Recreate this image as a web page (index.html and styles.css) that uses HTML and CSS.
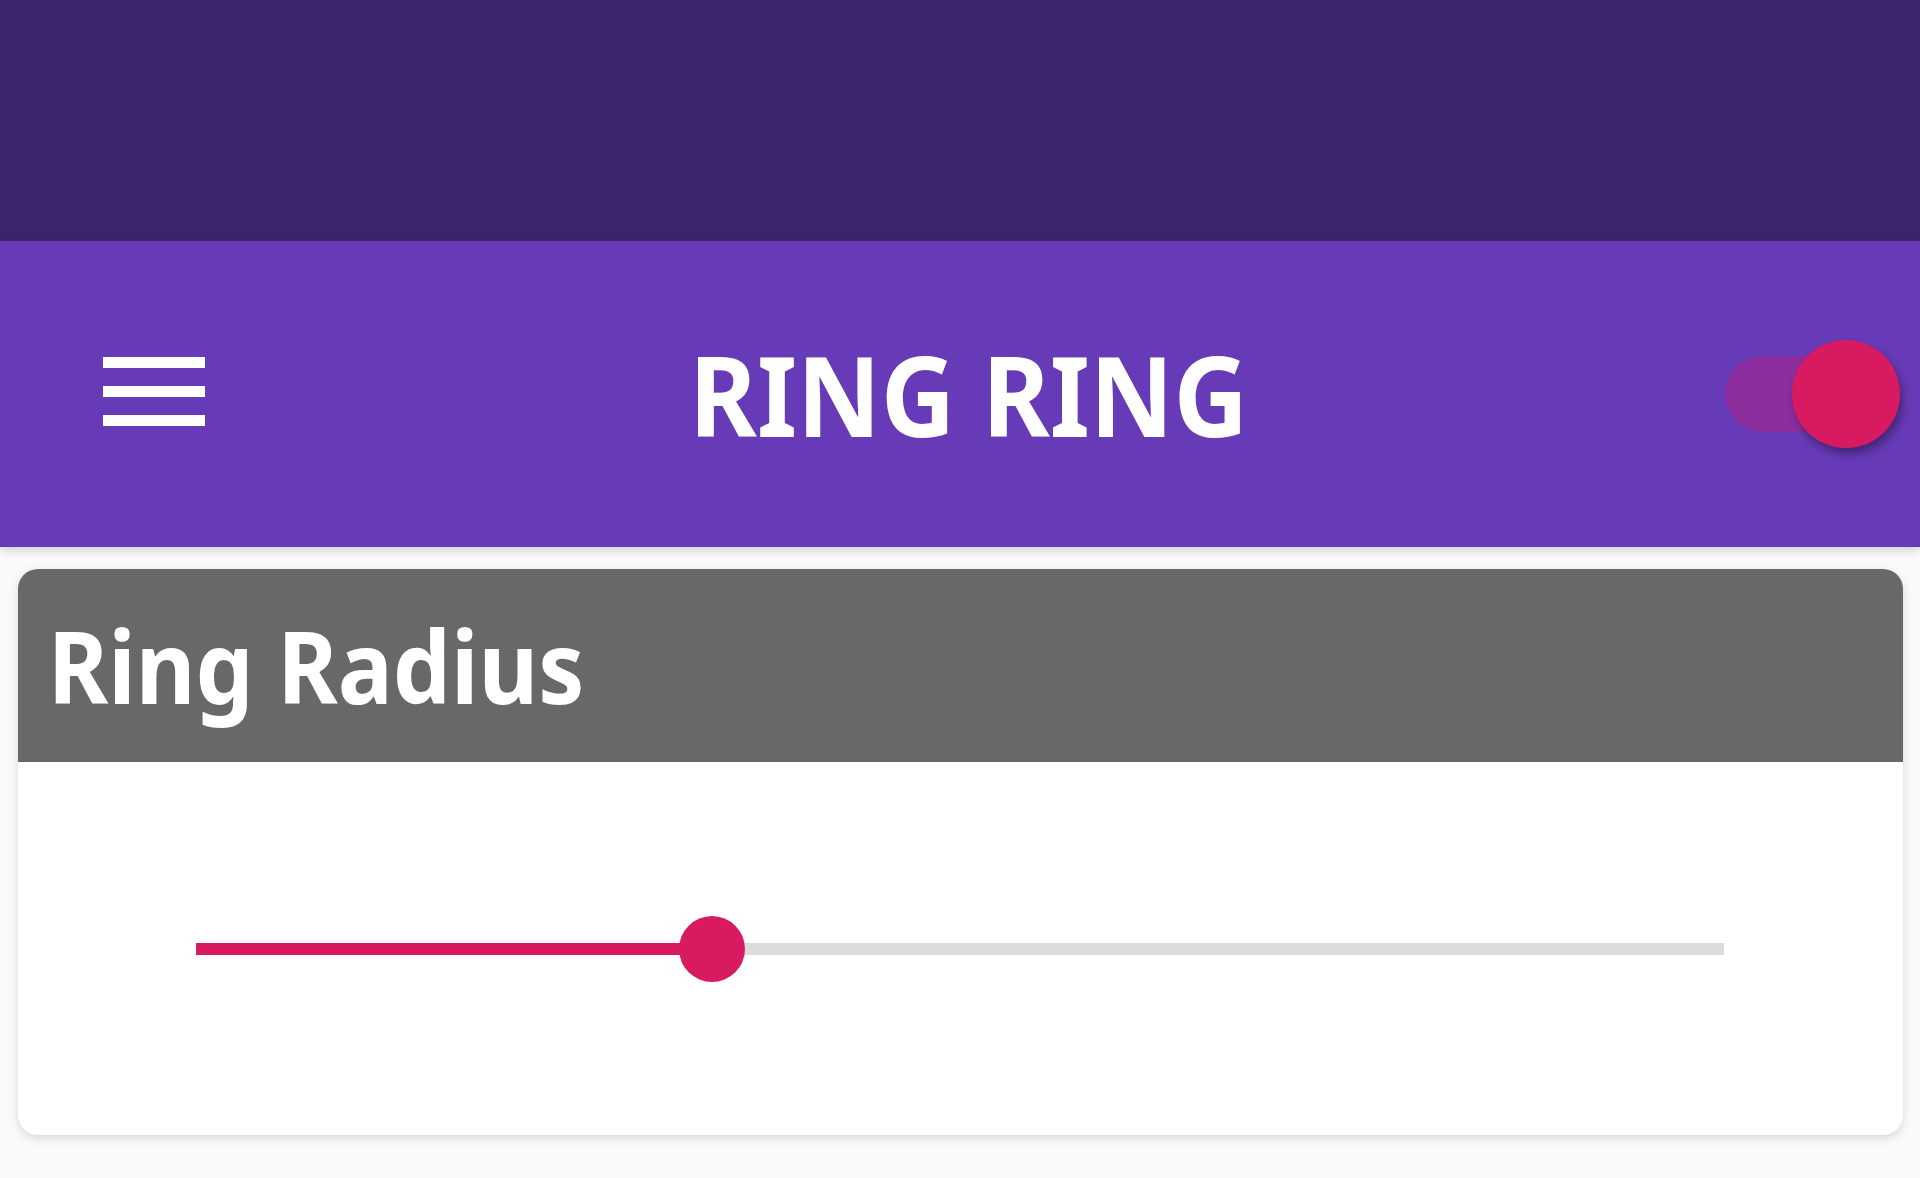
FILE: index.html
```html
<!DOCTYPE html>
<html>
<head>
  <title>Ring Ring</title>
  <link rel="stylesheet" href="styles.css">
</head>
<body>
  <div class="status-bar"></div>

  <header class="toolbar">
    <button class="nav-button" aria-label="Menu">
      <svg width="102" height="69" viewBox="0 0 102 69">
        <rect x="0" y="0" width="102" height="11" fill="#fff"/>
        <rect x="0" y="29" width="102" height="11" fill="#fff"/>
        <rect x="0" y="58" width="102" height="11" fill="#fff"/>
      </svg>
    </button>
    <h1 class="title"><span>RING RING</span></h1>
    <div class="switch on">
      <div class="switch-track"></div>
      <div class="switch-thumb"></div>
    </div>
  </header>

  <main class="content">
    <section class="card">
      <div class="card-header">
        <h2><span>Ring Radius</span></h2>
      </div>
      <div class="card-body">
        <div class="slider">
          <div class="slider-fill" style="width: 33.8%"></div>
          <div class="slider-thumb" style="left: 33.8%"></div>
        </div>
      </div>
    </section>

    <section class="card"></section>
  </main>
</body>
</html>
```

FILE: styles.css
```css
body {
  margin: 0;
  background-color: #fafafa;
  font-family: "Noto Sans", "Open Sans", sans-serif;
  overflow: hidden;
}

.status-bar {
  height: 241px;
  background-color: #3e246c;
}

.toolbar {
  height: 306px;
  display: flex;
  align-items: center;
  background-color: #673ab7;
  padding: 0 20px 0 103px;
  box-shadow: 0 3px 10px rgba(0, 0, 0, 0.18);
  position: relative;
  z-index: 1;
}

.nav-button {
  background: none;
  border: none;
  padding: 0;
  margin-top: -6px;
  display: flex;
  cursor: pointer;
}

.title {
  flex: 1;
  margin: 0;
  padding-left: 8px;
  text-align: center;
  color: #fff;
  font-size: 112px;
  font-weight: 700;
  line-height: 1;
}

.title span {
  display: inline-block;
  transform: scaleX(0.92);
}

.switch {
  position: relative;
  width: 175px;
  height: 108px;
}

.switch-track {
  position: absolute;
  left: 0;
  top: 16px;
  width: 175px;
  height: 76px;
  border-radius: 38px;
  background-color: #8c2e9e;
}

.switch-thumb {
  position: absolute;
  right: 0;
  top: 0;
  width: 108px;
  height: 108px;
  border-radius: 50%;
  background-color: #d81b60;
  box-shadow: 3px 6px 9px rgba(0, 0, 0, 0.35);
}

.content {
  padding: 22px 17px 0 18px;
}

.card {
  background-color: #fff;
  border-radius: 20px;
  box-shadow: 0 3px 10px rgba(0, 0, 0, 0.14);
  margin-bottom: 41px;
  overflow: hidden;
}

.card-header {
  height: 193px;
  display: flex;
  align-items: center;
  padding-left: 30px;
  background-color: #686868;
}

.card-header h2 {
  margin: 0;
  color: #fff;
  font-size: 101px;
  font-weight: 700;
  line-height: 1;
}

.card-header h2 span {
  display: inline-block;
  transform: scaleX(0.91);
  transform-origin: left center;
}

.card-body {
  height: 373px;
  padding: 181px 179px 0 178px;
  box-sizing: border-box;
}

.slider {
  position: relative;
  height: 12px;
  background-color: #dcdcdc;
}

.slider-fill {
  height: 100%;
  background-color: #d81b60;
}

.slider-thumb {
  position: absolute;
  top: 50%;
  width: 66px;
  height: 66px;
  margin: -33px 0 0 -33px;
  border-radius: 50%;
  background-color: #d81b60;
}
```
